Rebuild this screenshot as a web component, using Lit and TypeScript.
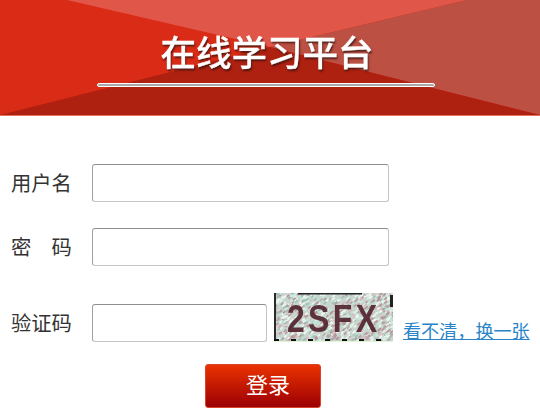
import { LitElement, html, css, svg } from "lit";
import { customElement } from "lit/decorators.js";

function noise() {
  let seed = 17;
  const rnd = () => ((seed = (seed * 16807) % 2147483647) / 2147483647);
  const colors = ["#bfe8dc", "#b79fa3", "#e6f5ee", "#9fc0b6", "#d8bcc0", "#f2f7f2", "#b8949a", "#cdeee4"];
  const out = [];
  for (let i = 0; i < 900; i++) {
    const x = rnd() * 119;
    const y = rnd() * 48;
    out.push(svg`<rect x=${x.toFixed(1)} y=${y.toFixed(1)} width="3.4" height="1.7" fill=${colors[Math.floor(rnd() * colors.length)]} transform="rotate(-40 ${x.toFixed(1)} ${y.toFixed(1)})"></rect>`);
  }
  return out;
}

@customElement("app-root")
export class AppRoot extends LitElement {
  static styles = css`
    :host { display: block; width: 540px; height: 415px; background: #fff; overflow: hidden; font-family: "Noto Sans CJK SC", "Noto Sans", sans-serif; }
    .header { position: relative; height: 115px; border-bottom: 1px solid #e8705f; display: flex; flex-direction: column; align-items: center; }
    .bg { position: absolute; inset: 0; width: 540px; height: 115px; display: block; }
    .title { position: relative; margin: 25px 0 0 -6px; height: 58px; font-size: 35.5px; line-height: 52px; color: #fff; font-weight: 500; -webkit-text-stroke: .3px #fff; text-shadow: 1px 2px 2px rgba(50, 20, 15, .8); white-space: nowrap; filter: blur(.3px); }
    .rule { position: relative; width: 338px; height: 4px; box-sizing: border-box; margin-left: -8px; background: #a9a9a9; border: 1px solid #fff; border-radius: 2px; }
    form { display: flex; flex-direction: column; padding: 48px 0 0 11px; }
    .row { display: flex; align-items: center; height: 38px; margin-bottom: 26px; }
    .label { width: 61px; margin: 0 20px 2px 0; font-size: 20.3px; line-height: 36px; color: #333; white-space: nowrap; }
    input { box-sizing: border-box; width: 297px; height: 38px; margin: 0; padding: 0 8px; background: #fff; border: 1px solid #c4c4c4; border-top-color: #8e8e8e; border-left-color: #a0a0a0; border-radius: 3px; outline: none; }
    .captcha-row { align-items: flex-end; height: 49px; margin-top: 1px; margin-bottom: 22px; }
    .captcha-input { width: 175px; margin-right: 7px; }
    .captcha { display: block; width: 119px; height: 49px; border-bottom: 1px solid #dff5d5; box-sizing: border-box; flex: none; }
    a { margin-left: 10px; font-size: 18.1px; line-height: 24px; color: #2a84c8; white-space: nowrap; text-decoration: underline; }
    .actions { display: flex; padding-left: 194px; }
    button { width: 116px; height: 44px; padding: 0 0 7px 10px; box-sizing: border-box; border: 1px solid #d8432c; border-radius: 3px; color: #fff; font: 22px/36px "Noto Sans CJK SC", "Noto Sans", sans-serif; background: linear-gradient(#ea3200, #9c0005); }
  `;

  render() {
    return html`
      <div class="header">
        <svg class="bg" viewBox="0 0 540 115" aria-hidden="true">
          <rect width="540" height="115" fill="#d92b15"></rect>
          <polygon points="67,0 467,0 270,47" fill="#e0574a"></polygon>
          <polygon points="467,0 540,0 540,115 270,47" fill="#bb5043"></polygon>
          <polygon points="0,115 270,47 540,115" fill="#ae2010"></polygon>
        </svg>
        <div class="title">在线学习平台</div>
        <div class="rule"></div>
      </div>
      <form>
        <div class="row"><span class="label">用户名</span><input type="text" /></div>
        <div class="row"><span class="label">密　码</span><input type="password" /></div>
        <div class="row captcha-row">
          <span class="label">验证码</span>
          <input class="captcha-input" type="text" />
          <svg class="captcha" viewBox="0 0 119 48" preserveAspectRatio="none" role="img" aria-label="验证码图片">
            <rect width="119" height="48" fill="#c8d4ce"></rect>
            ${noise()}
            <text transform="translate(13 39) scale(1 1.22)" font-family="Liberation Sans, sans-serif" font-weight="700" font-size="32" textLength="90" lengthAdjust="spacing" fill="#532530" opacity=".92">2SFX</text>
            <rect x="0" y="0" width="2" height="48" fill="#2a2a2a"></rect>
            <rect x="24" y="0" width="64" height="1.5" fill="#222"></rect>
            <rect x="116" y="2" width="3" height="12" fill="#222"></rect>
            <path d="M0 47h119" stroke="#111" stroke-width="2" stroke-dasharray="5 12"></path>
          </svg>
          <a href="#">看不清，换一张</a>
        </div>
        <div class="actions"><button type="button">登录</button></div>
      </form>
    `;
  }
}
